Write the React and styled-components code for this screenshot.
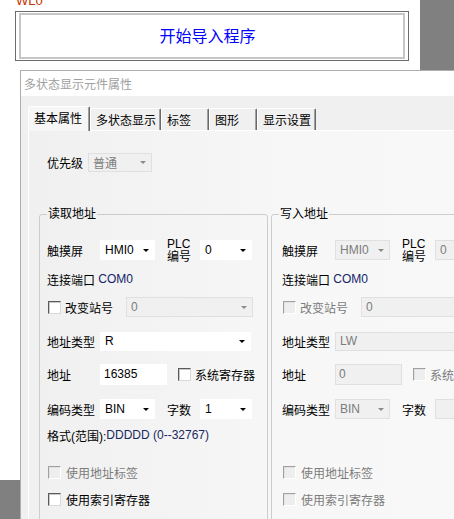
import React from "react";
import styled, { createGlobalStyle } from "styled-components";

const GlobalStyle = createGlobalStyle`
  html, body { margin: 0; padding: 0; background: #fff; }
  body {
    font-family: "Liberation Sans", "Noto Sans CJK SC", sans-serif;
    font-size: 12px;
    color: #000;
  }
  * { box-sizing: border-box; }
`;

const Page = styled.div`
  width: 454px;
  height: 519px;
  overflow: hidden;
  display: flex;
  flex-direction: column;
  background: #fff;
`;

const Top = styled.div`
  display: flex;
  height: 70px;
  flex-shrink: 0;
`;

const TopLeft = styled.div`
  width: 420px;
  padding-left: 15px;
`;

const Tag = styled.div`
  margin-top: -6px;
  height: 13px;
  line-height: 13px;
  font-size: 13px;
  color: #c83200;
  padding-left: 1px;
`;

const BigButton = styled.div`
  margin-top: 4px;
  width: 394px;
  height: 50px;
  border: 1px solid #6b6b6b;
  padding: 1px 3px;
`;

const BigButtonFace = styled.div`
  height: 100%;
  border: 2px solid #c6c6c6;
  display: flex;
  align-items: center;
  justify-content: center;
  color: #0000ff;
  font-size: 16px;
  font-family: "Noto Sans CJK SC", sans-serif;
  padding: 0 9px 2px 0;
`;

const GrayBlock = styled.div`
  flex: 1;
  background: #808080;
`;

const Bottom = styled.div`
  display: flex;
  flex: 1;
  min-height: 0;
`;

const LeftStrip = styled.div`
  width: 20px;
  flex-shrink: 0;
  display: flex;
  flex-direction: column;
  justify-content: flex-end;
`;

const GrayFoot = styled.div`
  height: 39px;
  background: #808080;
`;

const Dialog = styled.div`
  width: 480px;
  flex-shrink: 0;
  border-left: 1px solid #adadad;
  border-top: 1px solid #adadad;
  display: flex;
  flex-direction: column;
  background: #f0f0f0;
`;

const TitleBar = styled.div`
  height: 25px;
  flex-shrink: 0;
  background: #fff;
  padding-left: 3px;
  display: flex;
  align-items: center;
  color: #a0a0a0;
`;

const Body = styled.div`
  flex: 1;
  display: flex;
  flex-direction: column;
  padding: 10px 0 0 7px;
`;

const TabStrip = styled.div`
  display: flex;
  align-items: flex-end;
  height: 24px;
  flex-shrink: 0;
  position: relative;
  z-index: 1;
`;

const Tab = styled.div`
  width: ${(p) => p.$w}px;
  height: ${(p) => (p.$active ? 25 : 22)}px;
  margin-bottom: ${(p) => (p.$active ? -1 : 0)}px;
  background: ${(p) => (p.$active ? "#f6f6f6" : "#f0f0f0")};
  border-top: 1px solid #fff;
  border-left: 1px solid #fff;
  border-right: 1px solid #696969;
  box-shadow: inset -1px 0 #a0a0a0;
  border-radius: 2px 2px 0 0;
  padding-left: 5px;
  padding-bottom: ${(p) => (p.$active ? 4 : 0)}px;
  display: flex;
  align-items: center;
  white-space: nowrap;
`;

const Panel = styled.div`
  flex: 1;
  border-top: 1px solid #fff;
  border-left: 1px solid #fff;
  background: linear-gradient(to right, #f0f0f0 0%, #f3f3f3 25%, #f7f7f7 55%, #f8f8f8 100%);
  padding-left: 10px;
  display: flex;
  flex-direction: column;
`;

const PriorityRow = styled.div`
  margin-top: 22px;
  margin-left: 8px;
  height: 19px;
  display: flex;
  align-items: center;
`;

const Groups = styled.div`
  margin-top: 34px;
  display: flex;
  gap: 3px;
`;

const Group = styled.fieldset`
  width: ${(p) => p.$w}px;
  flex-shrink: 0;
  height: 330px;
  margin: 0;
  padding: 18px 0 0 7px;
  border: 1px solid #cdcdcd;
  border-radius: 3px;
  min-width: 0;
`;

const Legend = styled.legend`
  padding: 0 1px;
  line-height: 16px;
  font-size: 12px;
`;

const GroupContent = styled.div`
  padding-left: ${(p) => p.$indent || 0}px;
  display: flex;
  flex-direction: column;
`;

const Row = styled.div`
  margin-top: ${(p) => p.$mt || 0}px;
  height: 20px;
  display: flex;
  align-items: center;
  white-space: nowrap;
`;

const Label = styled.div`
  width: ${(p) => (p.$w ? `${p.$w}px` : "auto")};
  margin-left: ${(p) => p.$ml || 0}px;
  flex-shrink: 0;
  color: ${(p) => (p.$disabled ? "#7c7c7c" : "#000")};
`;

const StackLabel = styled.div`
  width: ${(p) => p.$w}px;
  margin-left: ${(p) => p.$ml || 0}px;
  line-height: 12.5px;
  display: flex;
  flex-direction: column;
  padding-top: 1px;
`;

const Value = styled.span`
  color: ${(p) => p.$color || "inherit"};
`;

const Select = styled.div`
  width: ${(p) => p.$w}px;
  height: ${(p) => p.$h || 20}px;
  margin-left: ${(p) => p.$ml || 0}px;
  flex-shrink: 0;
  display: flex;
  align-items: center;
  justify-content: space-between;
  padding: 0 5px 0 4px;
  background: ${(p) => (p.$disabled ? "#f0f0f0" : "#fff")};
  border: 1px solid ${(p) => (p.$disabled ? "#e0e0e0" : "#fff")};
  color: ${(p) => (p.$disabled ? "#7c7c7c" : "#000")};
`;

const Arrow = styled.span`
  width: 0;
  height: 0;
  border-left: 3px solid transparent;
  border-right: 3px solid transparent;
  border-top: 3px solid ${(p) => (p.$disabled ? "#8a8a8a" : "#000")};
`;

const TextBox = styled.div`
  width: ${(p) => p.$w}px;
  height: 21px;
  flex-shrink: 0;
  padding: 2px 3px 0;
  background: ${(p) => (p.$disabled ? "#f0f0f0" : "#fff")};
  border: 1px solid ${(p) => (p.$disabled ? "#e0e0e0" : "#fff")};
  color: ${(p) => (p.$disabled ? "#7c7c7c" : "#000")};
  line-height: 14px;
`;

const Check = styled.span`
  width: 13px;
  height: 13px;
  flex-shrink: 0;
  margin-left: ${(p) => p.$ml || 0}px;
  margin-right: 4px;
  border: 1px solid;
  border-color: ${(p) =>
    p.$disabled ? "#a0a0a0 #fff #fff #a0a0a0" : "#5a5a5a #d8d8d8 #d8d8d8 #5a5a5a"};
  background: ${(p) => (p.$disabled ? "#eeeeee" : "#fff")};
  box-shadow: ${(p) => (p.$disabled ? "inset 1px 1px #e2e2e2" : "inset 1px 1px #c8c8c8")};
`;

const FormatText = styled.div`
  margin-top: 6px;
  height: 20px;
  display: flex;
  align-items: center;
  white-space: nowrap;
`;

function Dropdown({ w, ml, h, disabled, children }) {
  return (
    <Select $w={w} $ml={ml} $h={h} $disabled={disabled}>
      <span>{children}</span>
      <Arrow $disabled={disabled} />
    </Select>
  );
}

function AddressGroup({ title, width, indent, disabled, stationValue, addrType, addr, showFormat }) {
  return (
    <Group $w={width}>
      <Legend>{title}</Legend>
      <GroupContent $indent={indent}>
        <Row>
          <Label $w={53}>触摸屏</Label>
          <Dropdown w={55} disabled={disabled}>HMI0</Dropdown>
          <StackLabel $w={33} $ml={12}>
            <span>PLC</span>
            <span>编号</span>
          </StackLabel>
          <Dropdown w={52} disabled={disabled}>0</Dropdown>
        </Row>
        <Row $mt={9}>
          <Label>连接端口</Label>
          <Value $color="#14246a">&nbsp;COM0</Value>
        </Row>
        <Row $mt={8}>
          <Check $ml={1} $disabled={disabled} />
          <Label $w={61} $disabled={disabled}>改变站号</Label>
          <Dropdown w={127} disabled>{stationValue}</Dropdown>
        </Row>
        <Row $mt={14}>
          <Label $w={53}>地址类型</Label>
          <Dropdown w={151} h={19} disabled={disabled}>{addrType}</Dropdown>
        </Row>
        <Row $mt={13}>
          <Label $w={53}>地址</Label>
          <TextBox $w={67} $disabled={disabled}>{addr}</TextBox>
          <Check $ml={11} $disabled={disabled} />
          <Label $disabled={disabled}>系统寄存器</Label>
        </Row>
        <Row $mt={15}>
          <Label $w={53}>编码类型</Label>
          <Dropdown w={55} disabled={disabled}>BIN</Dropdown>
          <Label $w={33} $ml={12}>字数</Label>
          <Dropdown w={52} disabled={disabled}>{disabled ? "" : "1"}</Dropdown>
        </Row>
        {showFormat ? (
          <FormatText>
            格式(范围):<Value $color="#18285e">DDDDD (0--32767)</Value>
          </FormatText>
        ) : (
          <FormatText />
        )}
        <Row $mt={17}>
          <Check $ml={1} $disabled />
          <Label $ml={1} $disabled>使用地址标签</Label>
        </Row>
        <Row $mt={7}>
          <Check $ml={1} $disabled={disabled} />
          <Label $ml={1} $disabled={disabled}>使用索引寄存器</Label>
        </Row>
      </GroupContent>
    </Group>
  );
}

const tabs = [
  { label: "基本属性", w: 62 },
  { label: "多状态显示", w: 71 },
  { label: "标签", w: 48 },
  { label: "图形", w: 48 },
  { label: "显示设置", w: 59 },
];

export default function App() {
  return (
    <>
      <GlobalStyle />
      <Page>
        <Top>
          <TopLeft>
            <Tag>WL0</Tag>
            <BigButton>
              <BigButtonFace>开始导入程序</BigButtonFace>
            </BigButton>
          </TopLeft>
          <GrayBlock />
        </Top>
        <Bottom>
          <LeftStrip>
            <GrayFoot />
          </LeftStrip>
          <Dialog>
            <TitleBar>多状态显示元件属性</TitleBar>
            <Body>
              <TabStrip>
                {tabs.map((t, i) => (
                  <Tab key={t.label} $w={t.w} $active={i === 0}>
                    {t.label}
                  </Tab>
                ))}
              </TabStrip>
              <Panel>
                <PriorityRow>
                  <Label $w={41}>优先级</Label>
                  <Dropdown w={64} h={19} disabled>普通</Dropdown>
                </PriorityRow>
                <Groups>
                  <AddressGroup
                    title="读取地址"
                    width={229}
                    indent={0}
                    stationValue="0"
                    addrType="R"
                    addr="16385"
                    showFormat
                  />
                  <AddressGroup
                    title="写入地址"
                    width={300}
                    indent={3}
                    disabled
                    stationValue="0"
                    addrType="LW"
                    addr="0"
                  />
                </Groups>
              </Panel>
            </Body>
          </Dialog>
        </Bottom>
      </Page>
    </>
  );
}
